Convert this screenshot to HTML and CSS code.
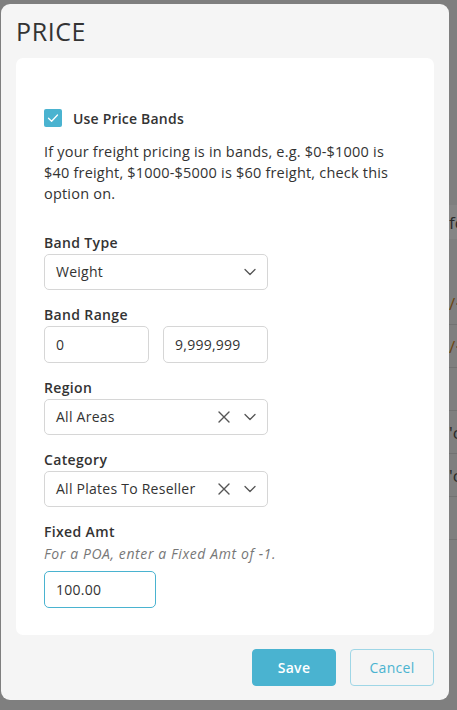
FILE: index.html
```html
<!DOCTYPE html>
<html lang="en">
<head>
<meta charset="utf-8">
<title>Price</title>
<link rel="stylesheet" href="styles.css">
</head>
<body>
<div class="backdrop">
  <div class="bg-table">
    <div class="bg-row bg-head"><span class="bg-cell">fo</span></div>
    <div class="bg-row"><span class="bg-cell"><i class="slash">/</i>·</span></div>
    <div class="bg-row"><span class="bg-cell"><i class="slash">/</i>·</span></div>
    <div class="bg-row"><span class="bg-cell"></span></div>
    <div class="bg-row"><span class="bg-cell">'c</span></div>
    <div class="bg-row"><span class="bg-cell">'c</span></div>
    <div class="bg-row"><span class="bg-cell"></span></div>
  </div>
</div>

<div class="modal">
  <h1 class="modal-title">PRICE</h1>
  <div class="card">
    <label class="check-row">
      <span class="checkbox">
        <svg width="12" height="10" viewBox="0 0 12 10"><path d="M1.5 5.2 L4.6 8.2 L10.5 2" fill="none" stroke="#fff" stroke-width="1.3" stroke-linecap="round" stroke-linejoin="round"/></svg>
      </span>
      <span class="check-label">Use Price Bands</span>
    </label>
    <p class="help">If your freight pricing is in bands, e.g. $0-$1000 is $40 freight, $1000-$5000 is $60 freight, check this option on.</p>

    <div class="field">
      <div class="label">Band Type</div>
      <div class="control select">
        <span class="value">Weight</span>
        <span class="icons">
          <svg class="chev" width="12" height="8" viewBox="0 0 12 8"><path d="M1 1.5 L6 6.5 L11 1.5" fill="none" stroke="#555" stroke-width="1.3" stroke-linecap="round" stroke-linejoin="round"/></svg>
        </span>
      </div>
    </div>

    <div class="field">
      <div class="label">Band Range</div>
      <div class="range">
        <div class="control input half">0</div>
        <div class="control input half">9,999,999</div>
      </div>
    </div>

    <div class="field">
      <div class="label">Region</div>
      <div class="control select">
        <span class="value">All Areas</span>
        <span class="icons">
          <svg class="clear" width="12" height="12" viewBox="0 0 12 12"><path d="M1 1 L11 11 M11 1 L1 11" fill="none" stroke="#555" stroke-width="1.4" stroke-linecap="round"/></svg>
          <svg class="chev" width="12" height="8" viewBox="0 0 12 8"><path d="M1 1.5 L6 6.5 L11 1.5" fill="none" stroke="#555" stroke-width="1.3" stroke-linecap="round" stroke-linejoin="round"/></svg>
        </span>
      </div>
    </div>

    <div class="field">
      <div class="label">Category</div>
      <div class="control select">
        <span class="value">All Plates To Reseller</span>
        <span class="icons">
          <svg class="clear" width="12" height="12" viewBox="0 0 12 12"><path d="M1 1 L11 11 M11 1 L1 11" fill="none" stroke="#555" stroke-width="1.4" stroke-linecap="round"/></svg>
          <svg class="chev" width="12" height="8" viewBox="0 0 12 8"><path d="M1 1.5 L6 6.5 L11 1.5" fill="none" stroke="#555" stroke-width="1.3" stroke-linecap="round" stroke-linejoin="round"/></svg>
        </span>
      </div>
    </div>

    <div class="field last">
      <div class="label">Fixed Amt</div>
      <div class="hint">For a POA, enter a Fixed Amt of -1.</div>
      <div class="control input amt focused">100.00</div>
    </div>
  </div>
  <div class="footer">
    <button class="btn btn-primary">Save</button>
    <button class="btn btn-outline">Cancel</button>
  </div>
</div>
</body>
</html>
```
FILE: styles.css
```css
* { box-sizing: border-box; }
html, body { margin: 0; padding: 0; }
body {
  width: 457px;
  height: 710px;
  overflow: hidden;
  background: #7f7f7f;
  font-family: "Open Sans", "Noto Sans", sans-serif;
  color: #333;
  position: relative;
}
.backdrop {
  padding-top: 205px;
}
.bg-table {
  margin-left: 449px;
}
.bg-row {
  height: 43px;
  border-bottom: 1px solid #727272;
  display: flex;
  align-items: center;
  font-size: 17px;
  color: #2a2a2a;
  white-space: nowrap;
}
.bg-head {
  height: 34px;
  background: #858585;
  border-bottom: 0;
  margin-bottom: 43px;
}
.slash { color: #6b4412; font-style: normal; }

.modal {
  position: absolute;
  left: 1px;
  top: 4px;
  width: 448px;
  height: 696px;
  background: #f5f5f5;
  border-radius: 9px;
  padding: 12px 15px 14px 15px;
  display: flex;
  flex-direction: column;
}
.modal-title {
  margin: 0 0 12px 0;
  font-size: 25px;
  line-height: 30px;
  font-weight: 400;
  letter-spacing: 0.6px;
  color: #333;
}
.card {
  background: #fff;
  border-radius: 7px;
  height: 577px;
  padding: 50px 28px 0 28px;
}
.check-row {
  display: flex;
  align-items: center;
  height: 20px;
  gap: 11px;
}
.checkbox {
  width: 18px;
  height: 18px;
  background: #4ab3d0;
  border-radius: 2px;
  display: flex;
  align-items: center;
  justify-content: center;
}
.check-label {
  font-size: 14px;
  font-weight: 600;
  letter-spacing: 0.2px;
  color: #333;
}
.help {
  margin: 13px 0 0 0;
  font-size: 14.5px;
  line-height: 21px;
  letter-spacing: 0.2px;
  color: #333;
  width: 350px;
}
.field {
  margin-top: 15px;
}
.help + .field { margin-top: 29px; }
.label {
  font-size: 14px;
  line-height: 20px;
  font-weight: 600;
  letter-spacing: 0.35px;
  color: #333;
  margin-bottom: 1px;
}
.hint {
  font-size: 14px;
  line-height: 21px;
  font-style: italic;
  letter-spacing: 0.6px;
  color: #777;
  margin-bottom: 7px;
}
.control {
  height: 36px;
  border: 1px solid #d6d6d6;
  border-radius: 5px;
  display: flex;
  align-items: center;
  padding-left: 11px;
  padding-bottom: 1px;
  font-size: 14px;
  letter-spacing: 0.25px;
  color: #333;
  background: #fff;
}
.select {
  width: 224px;
  justify-content: space-between;
  padding-right: 11px;
}
.icons {
  display: flex;
  align-items: center;
  gap: 14px;
}
.range {
  display: flex;
  gap: 14px;
}
.half { width: 105px; height: 37px; }
.amt { width: 112px; height: 37px; }
.focused { border-color: #4ab3d0; }

.footer {
  margin-top: auto;
  display: flex;
  justify-content: flex-end;
  gap: 14px;
}
.btn {
  width: 84px;
  height: 37px;
  border-radius: 4px;
  font-family: inherit;
  font-size: 14px;
  font-weight: 500;
  letter-spacing: 0.3px;
  cursor: pointer;
  padding-bottom: 2px;
}
.btn-primary {
  background: #4ab3d0;
  color: #fff;
  border: 1px solid #4ab3d0;
  font-weight: 600;
}
.btn-outline {
  background: transparent;
  color: #4ab3d0;
  border: 1px solid #9fd6e6;
  font-weight: 400;
}
```
